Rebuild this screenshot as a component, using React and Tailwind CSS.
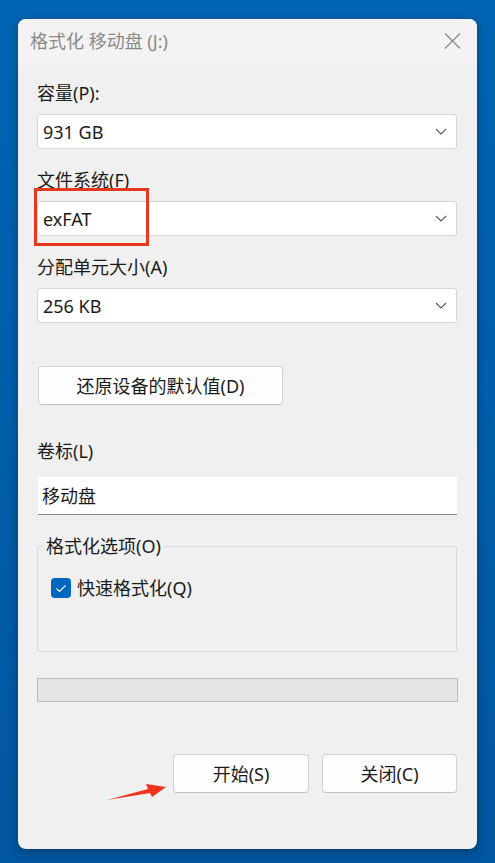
import React from 'react';

const font = { fontFamily: '"Noto Sans", "Noto Sans CJK SC", sans-serif' };

function Chevron() {
  return (
    <svg width="12" height="7" viewBox="0 0 12 7" className="shrink-0">
      <path d="M1 1 L6 6 L11 1" fill="none" stroke="#5a5a5a" strokeWidth="1.1" />
    </svg>
  );
}

function Combo({ value }) {
  return (
    <div className="h-[35px] bg-white border border-[#d6d6d6] rounded-[3px] flex items-center justify-between pl-[5px] pr-[9px]">
      <span className="text-[18px] leading-[24px] text-[#1b1b1b]">{value}</span>
      <Chevron />
    </div>
  );
}

function Label({ children, className = '' }) {
  return <div className={'text-[18px] leading-[22px] text-[#1b1b1b] ' + className}>{children}</div>;
}

function Button({ children, className = '' }) {
  return (
    <button className={'h-[39px] bg-[#fdfdfd] border border-[#d3d3d3] border-b-[#c2c2c2] rounded-[4px] text-[18px] leading-[22px] text-[#1b1b1b] ' + className}>
      {children}
    </button>
  );
}

export default function App() {
  return (
    <div className="relative w-[495px] h-[863px] bg-gradient-to-b from-[#0064b3] to-[#00579f] pt-[19px] pl-[18px]" style={font}>
      <div className="w-[459px] h-[830px] rounded-[8px] bg-[#f0f0f0] overflow-hidden shadow-[0_2px_8px_rgba(0,0,0,0.35)] flex flex-col">
        <div className="h-[44px] bg-[#f3f3f3] flex items-center justify-between pl-[12px] pr-[16px]">
          <span className="text-[18px] leading-[22px] text-[#8a8a8a]">格式化 移动盘 (J:)</span>
          <svg width="17" height="16" viewBox="0 0 17 16">
            <path d="M1 0.5 L16 15.5 M16 0.5 L1 15.5" stroke="#8a8a8a" strokeWidth="1.2" />
          </svg>
        </div>

        <div className="flex flex-col pl-[19px] pr-[20px] pt-[19px]">
          <Label>容量(P):</Label>
          <div className="mt-[10px]"><Combo value="931 GB" /></div>

          <Label className="mt-[20px]">文件系统(F)</Label>
          <div className="mt-[10px]"><Combo value="exFAT" /></div>

          <Label className="mt-[20px]">分配单元大小(A)</Label>
          <div className="mt-[10px]"><Combo value="256 KB" /></div>

          <div className="mt-[43px] pl-[1px]">
            <Button className="w-[245px]">还原设备的默认值(D)</Button>
          </div>

          <Label className="mt-[35px]">卷标(L)</Label>
          <div className="mt-[15px] h-[38px] bg-white border-b border-b-[#868686] flex items-center pl-[4px] ml-[1px]">
            <span className="text-[18px] leading-[24px] text-[#1b1b1b]">移动盘</span>
          </div>

          <fieldset className="mt-[20px] h-[117px] border border-[#dadada] rounded-[2px]">
            <legend className="ml-[5px] px-[3px] text-[18px] leading-[22px] text-[#1b1b1b]">格式化选项(O)</legend>
            <div className="flex items-center mt-[20px] ml-[13px] gap-[6px]">
              <div className="w-[20px] h-[20px] rounded-[4px] bg-[#0067c0] flex items-center justify-center">
                <svg width="12" height="9" viewBox="0 0 12 9">
                  <path d="M1.5 4.5 L4.5 7.5 L10.5 1.5" fill="none" stroke="#ffffff" strokeWidth="1.1" />
                </svg>
              </div>
              <span className="text-[18px] leading-[22px] text-[#1b1b1b]">快速格式化(Q)</span>
            </div>
          </fieldset>

          <div className="mt-[26px] h-[24px] bg-[#e6e6e6] border border-[#bcbcbc] mr-[-1px]"></div>

          <div className="mt-[52px] flex justify-end gap-[13px]">
            <Button className="w-[136px]">开始(S)</Button>
            <Button className="w-[135px]">关闭(C)</Button>
          </div>
        </div>
      </div>

      <div className="absolute left-[34px] top-[188px] w-[115px] h-[58px] border-[3px] border-[#e5381f]"></div>
      <svg className="absolute left-0 top-0" width="495" height="863" viewBox="0 0 495 863" style={{ pointerEvents: 'none' }}>
        <polygon points="107,800 148,789 146,784 166,787 152,797 150,793" fill="#f2331c" />
      </svg>
    </div>
  );
}
